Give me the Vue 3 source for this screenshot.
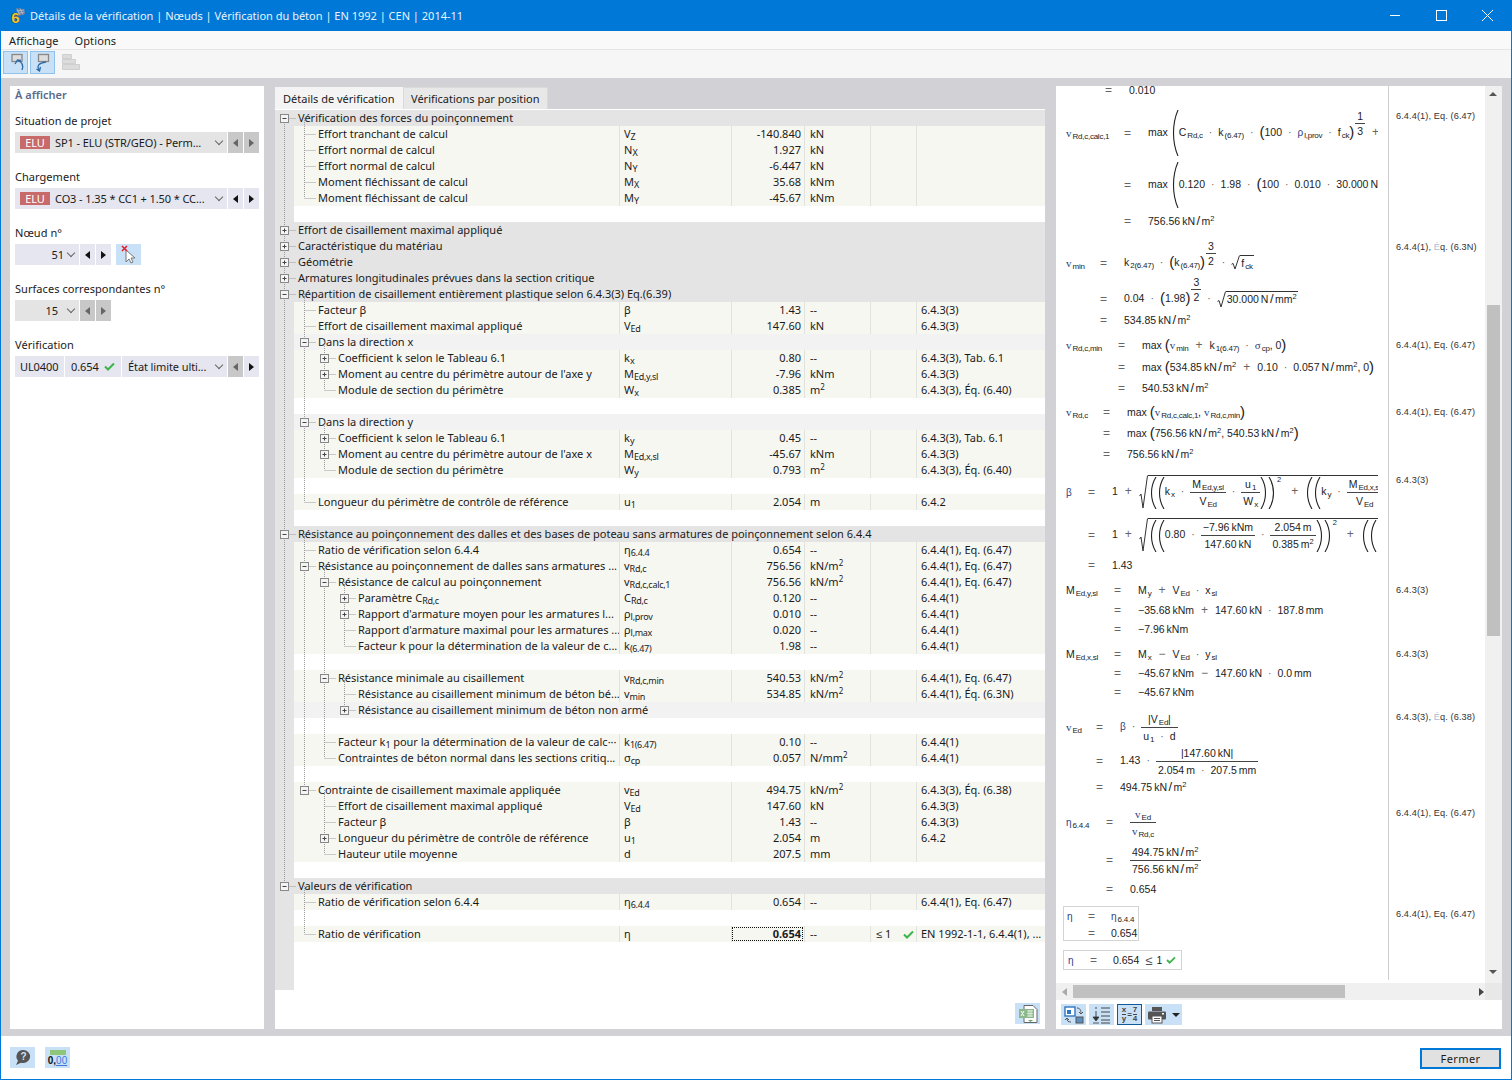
<script setup>
// tree rows of the detail table: one entry per 16px row, null = blank row
const row = (lv, t, s = '', v = '', u = '', r = '', extra = {}) => ({ lv, t, s, v, u, r, ...extra })
const group = (t, box = '-') => ({ lv: 0, t, box, kind: 'g0' })
const sub = (a, b) => `${a}<sub>${b}</sub>`
const m2 = 'm<sup>2</sup>'
const kNm2 = 'kN/m<sup>2</sup>'
const eq647 = '6.4.4(1), Eq. (6.47)'

const rows = [
  group('Vérification des forces du poinçonnement'),
  row(1, 'Effort tranchant de calcul', sub('V', 'Z'), '-140.840', 'kN'),
  row(1, 'Effort normal de calcul', sub('N', 'X'), '1.927', 'kN'),
  row(1, 'Effort normal de calcul', sub('N', 'Y'), '-6.447', 'kN'),
  row(1, 'Moment fléchissant de calcul', sub('M', 'X'), '35.68', 'kNm'),
  row(1, 'Moment fléchissant de calcul', sub('M', 'Y'), '-45.67', 'kNm'),
  null,
  group('Effort de cisaillement maximal appliqué', '+'),
  group('Caractéristique du matériau', '+'),
  group('Géométrie', '+'),
  group('Armatures longitudinales prévues dans la section critique', '+'),
  group('Répartition de cisaillement entièrement plastique selon 6.4.3(3) Eq.(6.39)'),
  row(1, 'Facteur β', 'β', '1.43', '--', '6.4.3(3)'),
  row(1, 'Effort de cisaillement maximal appliqué', sub('V', 'Ed'), '147.60', 'kN', '6.4.3(3)'),
  { lv: 1, t: 'Dans la direction x', box: '-', kind: 'g1' },
  row(2, 'Coefficient k selon le Tableau 6.1', sub('k', 'x'), '0.80', '--', '6.4.3(3), Tab. 6.1', { box: '+' }),
  row(2, 'Moment au centre du périmètre autour de l\'axe y', sub('M', 'Ed,y,sl'), '-7.96', 'kNm', '6.4.3(3)', { box: '+' }),
  row(2, 'Module de section du périmètre', sub('W', 'x'), '0.385', m2, '6.4.3(3), Éq. (6.40)'),
  null,
  { lv: 1, t: 'Dans la direction y', box: '-', kind: 'g1' },
  row(2, 'Coefficient k selon le Tableau 6.1', sub('k', 'y'), '0.45', '--', '6.4.3(3), Tab. 6.1', { box: '+' }),
  row(2, 'Moment au centre du périmètre autour de l\'axe x', sub('M', 'Ed,x,sl'), '-45.67', 'kNm', '6.4.3(3)', { box: '+' }),
  row(2, 'Module de section du périmètre', sub('W', 'y'), '0.793', m2, '6.4.3(3), Éq. (6.40)'),
  null,
  row(1, 'Longueur du périmètre de contrôle de référence', sub('u', '1'), '2.054', 'm', '6.4.2'),
  null,
  group('Résistance au poinçonnement des dalles et des bases de poteau sans armatures de poinçonnement selon 6.4.4'),
  row(1, 'Ratio de vérification selon 6.4.4', sub('η', '6.4.4'), '0.654', '--', eq647),
  row(1, 'Résistance au poinçonnement de dalles sans armatures ...', sub('v', 'Rd,c'), '756.56', kNm2, eq647, { box: '-' }),
  row(2, 'Résistance de calcul au poinçonnement', sub('v', 'Rd,c,calc,1'), '756.56', kNm2, eq647, { box: '-' }),
  row(3, 'Paramètre C<sub>Rd,c</sub>', sub('C', 'Rd,c'), '0.120', '--', '6.4.4(1)', { box: '+' }),
  row(3, 'Rapport d\'armature moyen pour les armatures l...', sub('ρ', 'l,prov'), '0.010', '--', '6.4.4(1)', { box: '+' }),
  row(3, 'Rapport d\'armature maximal pour les armatures ...', sub('ρ', 'l,max'), '0.020', '--', '6.4.4(1)'),
  row(3, 'Facteur k pour la détermination de la valeur de c...', sub('k', '(6.47)'), '1.98', '--', '6.4.4(1)'),
  null,
  row(2, 'Résistance minimale au cisaillement', sub('v', 'Rd,c,min'), '540.53', kNm2, eq647, { box: '-' }),
  row(3, 'Résistance au cisaillement minimum de béton bé...', sub('v', 'min'), '534.85', kNm2, '6.4.4(1), Éq. (6.3N)'),
  { lv: 3, t: 'Résistance au cisaillement minimum de béton non armé', box: '+', kind: 'g1' },
  null,
  row(2, 'Facteur k<sub>1</sub> pour la détermination de la valeur de calc···', sub('k', '1(6.47)'), '0.10', '--', '6.4.4(1)'),
  row(2, 'Contraintes de béton normal dans les sections critiq...', sub('σ', 'cp'), '0.057', 'N/mm<sup>2</sup>', '6.4.4(1)'),
  null,
  row(1, 'Contrainte de cisaillement maximale appliquée', sub('v', 'Ed'), '494.75', kNm2, '6.4.3(3), Éq. (6.38)', { box: '-' }),
  row(2, 'Effort de cisaillement maximal appliqué', sub('V', 'Ed'), '147.60', 'kN', '6.4.3(3)'),
  row(2, 'Facteur β', 'β', '1.43', '--', '6.4.3(3)'),
  row(2, 'Longueur du périmètre de contrôle de référence', sub('u', '1'), '2.054', 'm', '6.4.2', { box: '+' }),
  row(2, 'Hauteur utile moyenne', 'd', '207.5', 'mm'),
  null,
  group('Valeurs de vérification'),
  row(1, 'Ratio de vérification selon 6.4.4', sub('η', '6.4.4'), '0.654', '--', eq647),
  null,
  row(1, 'Ratio de vérification', 'η', '0.654', '--', 'EN 1992-1-1, 6.4.4(1), ...', { focus: true })
]

// dotted tree guides, worked out from the levels
const xOf = lv => 9.5 + 20 * lv
const yOf = i => 16 * i + 8
const guides = []
const boxes = []
rows.forEach((r, i) => {
  if (!r) return
  const x = xOf(r.lv)
  let p = i - 1
  while (p >= 0 && (!rows[p] || rows[p].lv >= (r.lv || 1)) && !(r.lv === 0 && rows[p] && rows[p].lv === 0)) p--
  if (p >= 0) guides.push(`M${x} ${yOf(p)}V${yOf(i)}`)
  guides.push(`M${x} ${yOf(i) + 0.5}H${x + 11}`)
  if (r.box) boxes.push({ x: x - 4, y: yOf(i) - 3.5, plus: r.box === '+' })
})

// formula helpers
const o = c => `<b class="o${c === '·' ? '' : ' big'}">${c}</b>`
const dot = o('·')
const mv = b => `<i class="mv">v</i><sub class="ws">${b}</sub>`
const ws = (a, b) => `${a}<sub class="ws">${b}</sub>`
const fr = (a, b) => `<span class="fr"><span>${a}</span><span>${b}</span></span>`
const par = (h, flip) => `<svg class="par" width="8" height="${h}" viewBox="0 0 8 ${h}"><path d="${flip ? `M1 0C7 ${h * 0.3} 7 ${h * 0.7} 1 ${h}` : `M7 0C1 ${h * 0.3} 1 ${h * 0.7} 7 ${h}`}" fill="none" stroke="#222" stroke-width="1.1"/></svg>`
const root = (inner, h) => `<span class="root"><svg width="9" height="${h}" viewBox="0 0 9 ${h}"><path d="M0.5 ${h * 0.62}L2 ${h * 0.56}L4 ${h - 1}L8.5 0.5" fill="none" stroke="#333"/></svg><span class="rc">${inner}</span></span>`
const exp = (a, b) => `<span class="fr ex"><span>${a}</span><span>${b}</span></span>`
const P = c => `<span class="p">${c}</span>`
const u = (n, unit) => `${n}<span class="un">${unit.replace('/m', '<span class="sl">/</span>m')}</span>`
const kn2 = n => u(n, 'kN/m<sup>2</sup>')

const blocks = [
  { w: 49, rows: [{ h: 24, x: '0.010' }] },
  { w: 68, rows: [
    { h: 62, s: mv('Rd,c,calc,1'), x: `max ${par(46)}${ws('C', 'Rd,c')}${dot}${ws('k', '(6.47)')}${dot}${P('(')}100${dot}<i class="rho">ρ</i><sub class="ws">l,prov</sub>${dot}${ws('f', 'ck')}${P(')')}${exp('1', '3')}${o('+')}` },
    { h: 42, x: `max ${par(46)}0.120${dot}1.98${dot}${P('(')}100${dot}0.010${dot}${u('30.000', 'N/mm<sup>2</sup>')}` },
    { h: 30, x: kn2('756.56') }
  ] },
  { w: 44, rows: [
    { h: 54, s: mv('min'), x: `${ws('k', '2(6.47)')}${dot}${P('(')}${ws('k', '(6.47)')}${P(')')}${exp('3', '2')}${dot}${root(ws('f', 'ck'), 15)}` },
    { h: 18, x: `0.04${dot}${P('(')}1.98${P(')')}${exp('3', '2')}${dot}${root(u('30.000', 'N/mm<sup>2</sup>'), 17)}` },
    { h: 24, x: kn2('534.85') }
  ] },
  { w: 62, rows: [
    { h: 26, s: mv('Rd,c,min'), x: `max ${P('(')}${mv('min')}${o('+')}${ws('k', '1(6.47)')}${dot}<i class="mv">σ</i><sub class="ws">cp</sub>, 0${P(')')}` },
    { h: 18, x: `max ${P('(')}${kn2('534.85')}${o('+')}0.10${dot}${u('0.057', 'N/mm<sup>2</sup>')}, 0${P(')')}` },
    { h: 24, x: kn2('540.53') }
  ] },
  { w: 47, rows: [
    { h: 24, s: mv('Rd,c'), x: `max ${P('(')}${mv('Rd,c,calc,1')}, ${mv('Rd,c,min')}${P(')')}` },
    { h: 18, x: `max ${P('(')}${kn2('756.56')}, ${kn2('540.53')}${P(')')}` },
    { h: 24, x: kn2('756.56') }
  ] },
  { w: 32, rows: [
    { h: 52, s: '<i class="rho">β</i>', x: `1${o('+')}${root(`${par(32)}${par(32)}${ws('k', 'x')}${dot}${fr(ws('M', 'Ed,y,sl'), ws('V', 'Ed'))}${dot}${fr(ws('u', '1'), ws('W', 'x'))}${par(32, true)}${par(32, true)}<sup class="sq">2</sup>${o('+')}${par(32)}${par(32)}${ws('k', 'y')}${dot}${fr(ws('M', 'Ed,x,sl'), ws('V', 'Ed'))}`, 34)}` },
    { h: 34, x: `1${o('+')}${root(`${par(32)}${par(32)}0.80${dot}${fr(u('−7.96', 'kNm'), u('147.60', 'kN'))}${dot}${fr(u('2.054', 'm'), u('0.385', 'm<sup>2</sup>'))}${par(32, true)}${par(32, true)}<sup class="sq">2</sup>${o('+')}${par(32)}${par(32)}`, 34)}` },
    { h: 26, x: '1.43' }
  ] },
  { w: 58, rows: [
    { h: 24, s: ws('M', 'Ed,y,sl'), x: `${ws('M', 'y')}${o('+')}${ws('V', 'Ed')}${dot}${ws('x', 'sl')}` },
    { h: 16, x: `${u('−35.68', 'kNm')}${o('+')}${u('147.60', 'kN')}${dot}${u('187.8', 'mm')}` },
    { h: 22, x: u('−7.96', 'kNm') }
  ] },
  { w: 58, rows: [
    { h: 28, s: ws('M', 'Ed,x,sl'), x: `${ws('M', 'x')}${o('−')}${ws('V', 'Ed')}${dot}${ws('y', 'sl')}` },
    { h: 10, x: `${u('−45.67', 'kNm')}${o('−')}${u('147.60', 'kN')}${dot}${u('0.0', 'mm')}` },
    { h: 28, x: u('−45.67', 'kNm') }
  ] },
  { w: 40, rows: [
    { h: 42, s: mv('Ed'), x: `<i class="rho">β</i>${dot}${fr(`|${ws('V', 'Ed')}|`, `${ws('u', '1')}${dot}d`)}` },
    { h: 26, x: `1.43${dot}${fr(`|${u('147.60', 'kN')}|`, `${u('2.054', 'm')}${dot}${u('207.5', 'mm')}`)}` },
    { h: 26, x: kn2('494.75') }
  ] },
  { w: 50, rows: [
    { h: 44, s: `<i class="rho">η</i><sub class="ws">6.4.4</sub>`, x: fr(mv('Ed'), mv('Rd,c')) },
    { h: 32, x: fr(kn2('494.75'), kn2('756.56')) },
    { h: 26, x: '0.654' }
  ] }
]

// references in the column right of the formulas, y = centre of the text
const refs = [
  { y: 116, t: eq647 },
  { y: 247, t: '6.4.4(1), ', f: 'É', e: 'q. (6.3N)' },
  { y: 345, t: eq647 },
  { y: 412, t: eq647 },
  { y: 480, t: '6.4.3(3)' },
  { y: 590, t: '6.4.3(3)' },
  { y: 654, t: '6.4.3(3)' },
  { y: 717, t: '6.4.3(3), ', f: 'É', e: 'q. (6.38)' },
  { y: 813, t: eq647 },
  { y: 914, t: eq647 }
].map((r, i, all) => ({ ...r, h: (all[i + 1] ? all[i + 1].y : r.y + 20) - r.y }))
</script>

<template>
  <div class="window">
    <header class="titlebar">
      <svg class="app-icon" width="17" height="17" viewBox="0 0 17 17">
        <path d="M7 1l8 1 1 5-6 2z" fill="#6d7d96" />
        <path d="M8 2l3 6M11 1.500l3 6M7.500 4l8-1M8.500 6.500l7-1.500" stroke="#c8d4e4" stroke-width=".6" />
        <text x="6.500" y="15.500" text-anchor="middle" font-size="15" font-weight="700" fill="#f0c42e" stroke="#3a3320" stroke-width=".7" paint-order="stroke" font-family="Liberation Sans, sans-serif">6</text>
      </svg>
      <span class="title">Détails de la vérification | Nœuds | Vérification du béton | EN 1992 | CEN | 2014-11</span>
      <div class="win-btns">
        <svg width="46" height="31" viewBox="0 0 46 31"><path d="M18 15.500h10" stroke="#fff" /></svg>
        <svg width="46" height="31" viewBox="0 0 46 31"><rect x="18.500" y="10.500" width="10" height="10" fill="none" stroke="#fff" /></svg>
        <svg width="46" height="31" viewBox="0 0 46 31"><path d="M18 10l11 11M29 10L18 21" stroke="#fff" /></svg>
      </div>
    </header>

    <nav class="menubar">
      <span>Affichage</span>
      <span>Options</span>
    </nav>

    <div class="toolbar">
      <button class="tb-btn">
        <svg width="20" height="20" viewBox="0 0 20 20">
          <rect x="6" y="2.500" width="10" height="7" fill="#ddd" stroke="#888" stroke-width="1.300" />
          <path d="M11.500 8C16 10 18 13 16 18M9 12l2.500-4 3.500.5" fill="none" stroke="#2a6aa8" stroke-width="1.300" />
        </svg>
      </button>
      <button class="tb-btn">
        <svg width="20" height="20" viewBox="0 0 20 20">
          <rect x="5.500" y="2.500" width="10" height="7" fill="#ddd" stroke="#888" stroke-width="1.300" />
          <path d="M13 10C6 11 3 14 6.500 18.500M3.500 17l3 2 1-4" fill="none" stroke="#2a6aa8" stroke-width="1.300" />
        </svg>
      </button>
      <svg class="tb-off" width="18" height="16" viewBox="0 0 18 16">
        <path d="M.5.500h9v4h-9zM.5 5.500h13v4H.5zM.5 10.500h17v5H.5z" fill="#dcdcdc" stroke="#cfcfcf" />
      </svg>
    </div>

    <main class="workspace">
      <aside class="side">
        <h2 class="side-title">À afficher</h2>

        <div class="field">
          <label>Situation de projet</label>
          <div class="ctrl">
            <div class="combo off wide"><span class="badge">ELU</span><span class="ctext">SP1 - ELU (STR/GEO) - Perm...</span><i class="chev"></i></div>
            <button class="step off"><i class="tri l"></i></button>
            <button class="step off"><i class="tri r"></i></button>
          </div>
        </div>

        <div class="field">
          <label>Chargement</label>
          <div class="ctrl">
            <div class="combo wide"><span class="badge">ELU</span><span class="ctext">CO3 - 1.35 * CC1 + 1.50 * CC...</span><i class="chev"></i></div>
            <button class="step"><i class="tri l"></i></button>
            <button class="step"><i class="tri r"></i></button>
          </div>
        </div>

        <div class="field">
          <label>Nœud n°</label>
          <div class="ctrl">
            <div class="combo num"><span class="ntext">51</span><i class="chev"></i></div>
            <button class="step"><i class="tri l"></i></button>
            <button class="step"><i class="tri r"></i></button>
            <button class="pick">
              <svg width="18" height="20" viewBox="0 0 18 20">
                <path d="M6 5v12l3-3 2 4 2-1-2-4h4z" fill="#fff" stroke="#777" />
                <path d="M2 1l5 5M7 1L2 6" stroke="#e0202c" stroke-width="1.600" />
              </svg>
            </button>
          </div>
        </div>

        <div class="field">
          <label>Surfaces correspondantes n°</label>
          <div class="ctrl">
            <div class="combo off num"><span class="ntext n2">15</span><i class="chev"></i></div>
            <button class="step off"><i class="tri l"></i></button>
            <button class="step off"><i class="tri r"></i></button>
          </div>
        </div>

        <div class="field">
          <label>Vérification</label>
          <div class="ctrl">
            <div class="combo wide split">
              <span class="seg s1">UL0400</span>
              <span class="seg s2">0.654
                <svg width="11" height="9" viewBox="0 0 11 9"><path d="M1 4.500l3 3 6-6" fill="none" stroke="#3cb44a" stroke-width="2" /></svg>
              </span>
              <span class="seg s3">État limite ulti...</span>
              <i class="chev"></i>
            </div>
            <button class="step off"><i class="tri l"></i></button>
            <button class="step"><i class="tri r"></i></button>
          </div>
        </div>
      </aside>

      <section class="center">
        <div class="tabs">
          <span class="tab active">Détails de vérification</span>
          <span class="tab">Vérifications par position</span>
        </div>
        <div class="center-body">
          <div class="tree">
            <div
              v-for="(r, i) in rows"
              :key="i"
              class="trow"
              :class="r ? (r.kind || 'leaf') : 'blank'"
            >
              <template v-if="r">
                <div class="name" :class="'lv' + r.lv" v-html="r.t"></div>
                <template v-if="!r.kind">
                  <div class="cell sym" v-html="r.s"></div>
                  <div class="cell val" :class="{ focus: r.focus }">{{ r.v }}</div>
                  <div class="cell unit" v-html="r.u"></div>
                  <div class="cell chk">
                    <template v-if="r.focus">
                      <span>≤ 1</span>
                      <svg width="11" height="9" viewBox="0 0 11 9"><path d="M1 4.500l3 3 6-6" fill="none" stroke="#3cb44a" stroke-width="2" /></svg>
                    </template>
                  </div>
                  <div class="cell ref">{{ r.r }}</div>
                </template>
              </template>
            </div>
            <div class="tree-end"></div>

            <svg class="guides" width="120" height="832">
              <path :d="guides.join('')" fill="none" stroke="#9a9a9a" stroke-dasharray="1 1" />
              <g v-for="(b, i) in boxes" :key="i">
                <rect :x="b.x" :y="b.y" width="8" height="8" fill="#f4f4f4" stroke="#888" />
                <path :d="`M${b.x + 2} ${b.y + 4}h4`" stroke="#444" />
                <path v-if="b.plus" :d="`M${b.x + 4} ${b.y + 2}v4`" stroke="#444" />
              </g>
            </svg>
          </div>
          <button class="export">
            <svg width="20" height="18" viewBox="0 0 20 18">
              <path d="M6 .500h9l4 4v13H6z" fill="#fff" stroke="#666" />
              <rect x="1" y="4" width="15" height="9" fill="#8cb88c" />
              <path d="M3 6l3 5M6 6l-3 5" stroke="#fff" />
              <path d="M9 6h6M9 8.500h6M9 11h6M11 5v7M13 5v7" stroke="#e8f2e8" stroke-width=".8" />
              <path d="M10 15h5l-2.500 2z" fill="#6aa56a" />
            </svg>
          </button>
        </div>
      </section>

      <section class="report">
        <div class="report-top">
          <div class="formulas">
            <div class="f-inner">
              <div v-for="(b, i) in blocks" :key="i" class="fblock">
                <div
                  v-for="(r, j) in b.rows"
                  :key="j"
                  class="frow"
                  :style="{ height: r.h + 'px', gridTemplateColumns: b.w + 'px 24px 1fr' }"
                >
                  <span class="fsym" v-html="r.s"></span>
                  <span class="feq">=</span>
                  <span class="fexpr" v-html="r.x"></span>
                </div>
              </div>

              <div class="fbox b1">
                <div class="frow box-row">
                  <span class="fsym2"><i class="rho">η</i></span><span class="feq">=</span>
                  <span class="fexpr"><i class="rho">η</i><sub class="ws">6.4.4</sub></span>
                </div>
                <div class="frow box-row">
                  <span></span><span class="feq">=</span><span class="fexpr">0.654</span>
                </div>
              </div>
              <div class="fbox b2">
                <span class="fsym2"><i class="rho">η</i></span>
                <span class="feq">=</span>
                <span class="fexpr">0.654</span>
                <span class="leq">≤</span>
                <span class="fexpr">1</span>
                <svg width="10" height="8" viewBox="0 0 11 9"><path d="M1 4.500l3 3 6-6" fill="none" stroke="#3cb44a" stroke-width="2" /></svg>
              </div>
            </div>
          </div>

          <div class="refs">
            <div v-for="(r, i) in refs" :key="i" class="ref-row" :style="{ height: r.h + 'px' }">
              {{ r.t }}<span v-if="r.f" class="faint">{{ r.f }}</span>{{ r.e }}
            </div>
          </div>

          <div class="vbar">
            <i class="arrow up"></i>
            <div class="vthumb"></div>
            <i class="arrow down"></i>
          </div>
        </div>

        <div class="hbar">
          <i class="tri l pale"></i>
          <div class="hthumb"></div>
          <i class="tri r dark"></i>
          <div class="corner"></div>
        </div>

        <div class="report-tools">
          <button class="rt">
            <svg width="22" height="20" viewBox="0 0 22 20">
              <rect x="2" y="2" width="10" height="9" fill="#fff" stroke="#2f75c0" stroke-width="1.400" />
              <rect x="4" y="5" width="4" height="4" fill="#2f75c0" />
              <rect x="13" y="12" width="7" height="6" fill="#5b8fc0" stroke="#555" />
              <path d="M14 3c3 0 4 2 4 6M16 7l2 2 2-2M8 17c-3 0-4-1-4-4M2 15l2-2 2 2" fill="none" stroke="#555" />
            </svg>
          </button>
          <button class="rt">
            <svg width="20" height="20" viewBox="0 0 20 20">
              <path d="M9 3h9M9 7h9M9 11h9M9 15h9M9 18h9" stroke="#444" />
              <path d="M4 2v2M4 6v6" stroke="#444" />
              <path d="M1 12h6l-3 4zM1 18h6" fill="#333" stroke="#333" stroke-width=".8" />
            </svg>
          </button>
          <button class="rt on">
            <span class="mini-frac"><span>x</span><span>y</span></span><span class="mini-eq">=</span><span class="mini-frac"><span>7</span><span>4</span></span>
          </button>
          <button class="rt print">
            <svg width="20" height="18" viewBox="0 0 20 18">
              <rect x="5" y="1" width="10" height="4" fill="#555" />
              <rect x="1" y="5.500" width="18" height="8" rx="1" fill="#555" />
              <rect x="5" y="10" width="10" height="7" fill="#fff" stroke="#555" />
              <path d="M7 12.500h6M7 14.500h6" stroke="#555" />
              <rect x="15" y="7" width="2" height="1.500" fill="#fff" />
            </svg>
            <i class="drop"></i>
          </button>
        </div>
      </section>
    </main>

    <footer class="footer">
      <button class="foot-btn">
        <svg width="18" height="17" viewBox="0 0 18 17">
          <path d="M9 1a7 6.500 0 1 1-2 12.700L2 16l2-4.300A6.500 6.500 0 0 1 9 1z" fill="#555" />
          <text x="9.500" y="11" text-anchor="middle" font-size="10" font-weight="700" fill="#cfe4f7" font-family="Liberation Sans, sans-serif">?</text>
        </svg>
      </button>
      <button class="foot-btn num-btn">
        <span class="ruler"></span>
        <span class="zero">0,<u>00</u></span>
      </button>
      <button class="close-btn">Fermer</button>
    </footer>
  </div>
</template>

<style>
body {
  margin: 0;
}

/* formula pieces come through v-html */
.fexpr sub, .fsym sub, .fsym2 sub, .fexpr sup {
  line-height: 0;
}
.fexpr sub, .fsym sub, .fsym2 sub {
  font-size: 8px;
  vertical-align: -2px;
}
.fexpr sub.ws, .fsym sub.ws, .fsym2 sub.ws {
  margin-left: 1px;
  letter-spacing: -0.25px;
}
.fexpr sup {
  font-size: 7.5px;
  vertical-align: 4px;
}
.fexpr .o {
  font-weight: 400;
  color: #666;
  margin: 0 6px;
}
.fexpr .o.big {
  margin: 0 7px;
  font-size: 12px;
}
.fexpr .mv, .fsym .mv {
  font-family: "Liberation Serif", serif;
  font-style: normal;
  font-size: 11px;
  color: #2c3f86;
}
.fexpr .rho, .fsym .rho, .fsym2 .rho {
  font-style: normal;
  color: #2c3f86;
  font-size: 10px;
}
.fexpr .p {
  font-size: 15px;
  font-weight: 300;
  line-height: 0;
  vertical-align: -1px;
}
.fexpr .un {
  margin-left: 2px;
}
.fexpr .sl {
  font-size: 13px;
  line-height: 0;
  margin: 0 1.5px;
  font-weight: 300;
}
.fexpr .par {
  vertical-align: middle;
}
.fexpr .fr {
  display: inline-flex;
  flex-direction: column;
  align-items: center;
  vertical-align: middle;
  line-height: 16px;
}
.fexpr .fr > span:first-child {
  align-self: stretch;
  text-align: center;
  border-bottom: 1px solid #444;
  padding: 0 2px;
}
.fexpr .fr > span:last-child {
  padding: 0 2px;
}
.fexpr .fr.ex {
  position: relative;
  top: -10px;
  margin-left: 1px;
  line-height: 14px;
}
.fexpr .root {
  display: inline-flex;
  vertical-align: middle;
  align-items: flex-start;
}
.fexpr .rc {
  border-top: 1px solid #333;
  padding: 0 1px;
  line-height: 15px;
  white-space: nowrap;
}
.fexpr .sq {
  position: relative;
  top: -9px;
  margin: 0 3px 0 1px;
}
</style>

<style scoped>
.window {
  width: 1512px;
  height: 1080px;
  box-sizing: border-box;
  display: flex;
  flex-direction: column;
  border: 1px solid #0078d7;
  border-top: none;
  background: #fff;
  font-family: "Noto Sans", "Liberation Sans", sans-serif;
  font-size: 11px;
  color: #1a1a1a;
  overflow: hidden;
}

button {
  border: none;
  padding: 0;
  font: inherit;
  color: inherit;
}

/* title bar */
.titlebar {
  height: 31px;
  background: #0078d7;
  color: #e9f3fb;
  display: flex;
  align-items: center;
  padding-left: 8px;
  flex: none;
}
.app-icon {
  margin-right: 4px;
}
.title {
  font-size: 11px;
}
.win-btns {
  margin-left: auto;
  display: flex;
  margin-right: 1px;
}

.menubar {
  height: 19px;
  flex: none;
  background: #f9f9f9;
  border-bottom: 1px solid #e6e6e6;
  box-sizing: border-box;
  display: flex;
  gap: 16px;
  padding-left: 8px;
  align-items: center;
  letter-spacing: 0.1px;
}

.toolbar {
  height: 28px;
  flex: none;
  box-sizing: border-box;
  background: #f6f6f6;
  display: flex;
  align-items: center;
  gap: 2px;
  padding: 0 0 4px 2px;
}
.tb-btn {
  width: 25px;
  height: 23px;
  box-sizing: border-box;
  background: #c9e1f6;
  border: 1px solid #8fc3ee;
  display: flex;
  align-items: center;
  justify-content: center;
}
.tb-off {
  margin-left: 5px;
}

/* main area */
.workspace {
  height: 958px;
  flex: none;
  box-sizing: border-box;
  background: #d1d1d6;
  display: flex;
  gap: 11px;
  padding: 8px 9px 7px 9px;
}

.side {
  width: 254px;
  background: #fff;
  flex: none;
  box-sizing: border-box;
  padding: 0 5px;
}
.side-title {
  margin: 0;
  height: 18px;
  font-size: 11px;
  font-weight: 600;
  color: #5a6a8c;
  line-height: 18px;
}
.field {
  height: 56px;
  padding-top: 8px;
  box-sizing: border-box;
}
.field label {
  display: block;
  height: 20px;
  line-height: 18px;
  letter-spacing: 0.05px;
}
.ctrl {
  display: flex;
  gap: 1px;
}
.combo {
  height: 21px;
  background: #e6e6f0;
  display: flex;
  align-items: center;
  position: relative;
  box-sizing: border-box;
  letter-spacing: -0.1px;
}
.combo.off {
  background: #e4e4e4;
}
.combo.wide {
  width: 212px;
  padding-left: 5px;
}
.combo.num {
  width: 64px;
}
.badge {
  width: 30px;
  height: 13px;
  line-height: 13px;
  text-align: center;
  background: #c96a6a;
  color: #fff;
  margin-right: 5px;
  flex: none;
}
.ctext {
  white-space: nowrap;
}
.ntext {
  margin-left: auto;
  margin-right: 15px;
}
.ntext.n2 {
  margin-right: 21px;
}
.chev {
  position: absolute;
  right: 5px;
  top: 6px;
  width: 5px;
  height: 5px;
  border-right: 1px solid #666;
  border-bottom: 1px solid #666;
  transform: rotate(45deg);
}
.step {
  width: 15px;
  height: 21px;
  background: #e6e6f0;
  display: flex;
  align-items: center;
  justify-content: center;
}
.step.off {
  background: #c8c8c8;
}
.tri {
  display: block;
  width: 0;
  height: 0;
  border-top: 4px solid transparent;
  border-bottom: 4px solid transparent;
}
.tri.l {
  border-right: 5px solid #111;
}
.tri.r {
  border-left: 5px solid #111;
}
.step.off .tri.l {
  border-right-color: #666;
}
.step.off .tri.r {
  border-left-color: #666;
}
.pick {
  width: 25px;
  height: 21px;
  margin-left: 4px;
  background: #c9e1f6;
  display: flex;
  align-items: center;
  justify-content: center;
}
.split .seg {
  white-space: nowrap;
  display: flex;
  align-items: center;
  height: 100%;
}
.s1 {
  width: 44px;
}
.s2 {
  width: 57px;
  border-left: 1px solid #fff;
  padding-left: 6px;
  gap: 5px;
  box-sizing: border-box;
}
.s3 {
  border-left: 1px solid #fff;
  padding-left: 6px;
}

/* centre */
.center {
  width: 770px;
  flex: none;
  display: flex;
  flex-direction: column;
}
.tabs {
  height: 23px;
  flex: none;
  display: flex;
  padding-top: 1px;
  box-sizing: border-box;
}
.tab {
  padding: 0 7px;
  width: 145px;
  box-sizing: border-box;
  background: #e8e8e8;
  border: 1px solid #dadada;
  border-bottom: none;
  line-height: 21px;
  white-space: nowrap;
}
.tab.active {
  width: 128px;
  padding-left: 8px;
  background: #f4f4f4;
  border: none;
  line-height: 23px;
}
.center-body {
  flex: 1;
  min-height: 0;
  background: #fff;
  position: relative;
}
.tree {
  position: relative;
  padding-top: 1px;
}
.trow {
  height: 16px;
  display: grid;
  grid-template-columns: 344px 112px 73px 66px 46px 129px;
  background: linear-gradient(to right, #e4e4e4 19px, transparent 19px);
  line-height: 16px;
  white-space: nowrap;
}
.trow.g0 {
  background: #e4e4e4;
  display: block;
}
.trow.g1 {
  background: linear-gradient(to right, #e4e4e4 19px, #f2f2f2 19px);
  display: block;
}
.trow.leaf {
  background: linear-gradient(to right, #e4e4e4 19px, #f7f7f2 19px);
}
.name {
  overflow: hidden;
}
.name.lv0 {
  padding-left: 23px;
}
.name.lv1 {
  padding-left: 43px;
}
.name.lv2 {
  padding-left: 63px;
}
.name.lv3 {
  padding-left: 83px;
}
.cell {
  border-left: 1px solid #e2e2dc;
  box-sizing: border-box;
  overflow: hidden;
}
.sym {
  padding-left: 4px;
}
.val {
  text-align: right;
  padding-right: 3px;
}
.val.focus {
  font-weight: 700;
  outline: 1px dotted #111;
  outline-offset: -2px;
}
.unit {
  padding-left: 5px;
}
.chk {
  padding-left: 5px;
  display: flex;
  align-items: center;
  justify-content: space-between;
  padding-right: 2px;
}
.ref {
  padding-left: 4px;
}
.cell :deep(sub), .name :deep(sub) {
  font-size: 9px;
  line-height: 0;
  vertical-align: -2px;
  letter-spacing: -0.3px;
}
.cell :deep(sup) {
  font-size: 8px;
  line-height: 0;
  vertical-align: 4px;
}
.tree-end {
  height: 48px;
  width: 19px;
  background: #e4e4e4;
}
.guides {
  position: absolute;
  left: 0;
  top: 1px;
  pointer-events: none;
}
.export {
  position: absolute;
  right: 5px;
  bottom: 5px;
  width: 25px;
  height: 21px;
  background: #c9e1f6;
  display: flex;
  align-items: center;
  justify-content: center;
}

/* report on the right */
.report {
  flex: 1;
  min-width: 0;
  background: #fff;
  display: flex;
  flex-direction: column;
}
.report-top {
  height: 897px;
  flex: none;
  display: flex;
}
.formulas {
  width: 322px;
  height: 894px;
  overflow: hidden;
  flex: none;
  font-family: "Liberation Sans", Arial, sans-serif;
  font-size: 10.5px;
  color: #222;
}
.f-inner {
  margin-top: -8px;
}
.frow {
  display: grid;
  grid-template-rows: minmax(0, 1fr);
  align-items: center;
  white-space: nowrap;
}
.box-row {
  grid-template-columns: 21px 23px auto;
}
.fsym {
  padding-left: 10px;
}
.feq {
  color: #666;
  font-size: 12px;
}
.fbox {
  border: 1px solid #d4d4d4;
  margin-left: 7px;
  box-sizing: border-box;
}
.fbox.b1 {
  width: 76px;
  height: 35px;
  margin-top: 4px;
  padding: 0 3px 0 3px;
}
.fbox.b1 .frow {
  height: 17px;
}
.fbox.b2 {
  width: 119px;
  height: 20px;
  margin-top: 9px;
  padding-left: 4px;
  display: flex;
  align-items: center;
}
.b2 .fsym2 {
  width: 22px;
}
.b2 .feq {
  width: 23px;
}
.leq {
  margin: 0 4px 0 6px;
  color: #555;
  font-size: 13px;
}
.b2 svg {
  margin-left: 4px;
}
.refs {
  width: 97px;
  height: 894px;
  flex: none;
  margin-left: 10px;
  border-left: 1px solid #cfcfcf;
  box-sizing: border-box;
  padding: 24px 0 0 7px;
  font-family: "Liberation Sans", Arial, sans-serif;
  font-size: 9.2px;
  letter-spacing: 0.1px;
  line-height: 12px;
  color: #333;
  white-space: nowrap;
  overflow: hidden;
}
.faint {
  color: #a8bcd6;
}
.vbar {
  flex: 1;
  background: #f0f0f0;
  position: relative;
}
.vthumb {
  position: absolute;
  left: 2px;
  right: 2px;
  top: 219px;
  height: 331px;
  background: #c0c0c0;
}
.arrow {
  position: absolute;
  left: 4px;
  border-left: 4px solid transparent;
  border-right: 4px solid transparent;
}
.arrow.up {
  top: 6px;
  border-bottom: 4px solid #555;
}
.arrow.down {
  bottom: 9px;
  border-top: 4px solid #555;
}
.hbar {
  height: 17px;
  flex: none;
  background: #f0f0f0;
  position: relative;
  display: flex;
  align-items: center;
  padding-left: 6px;
}
.hthumb {
  position: absolute;
  left: 17px;
  width: 272px;
  top: 2px;
  height: 13px;
  background: #c0c0c0;
}
.tri.pale {
  border-right-color: #aaa;
}
.tri.dark {
  border-left-color: #444;
  margin-left: 412px;
}
.corner {
  position: absolute;
  right: 0;
  top: 0;
  width: 17px;
  height: 17px;
  background: #e8e8e8;
}
.report-tools {
  flex: 1;
  display: flex;
  align-items: flex-start;
  padding: 4px 0 0 5px;
  gap: 3px;
}
.rt {
  width: 25px;
  height: 21px;
  box-sizing: border-box;
  background: #c9e1f6;
  display: flex;
  align-items: center;
  justify-content: center;
}
.rt.on {
  border: 1px solid #0e5a9c;
  font-family: "Liberation Sans", sans-serif;
  font-size: 8px;
  font-weight: 700;
  color: #444;
}
.mini-frac {
  display: inline-flex;
  flex-direction: column;
  line-height: 8px;
}
.mini-frac span:first-child {
  border-bottom: 1px solid #444;
}
.mini-eq {
  margin: 0 1px;
}
.rt.print {
  width: 37px;
  justify-content: flex-start;
  padding-left: 2px;
}
.drop {
  margin-left: 5px;
  border-left: 4px solid transparent;
  border-right: 4px solid transparent;
  border-top: 4px solid #222;
}

/* footer */
.footer {
  flex: 1;
  display: flex;
  align-items: flex-start;
  background: #fff;
  padding: 11px 0 0 9px;
  gap: 10px;
}
.foot-btn {
  width: 25px;
  height: 21px;
  background: #c9e1f6;
  display: flex;
  align-items: center;
  justify-content: center;
  position: relative;
}
.num-btn {
  flex-direction: column;
  font-family: "Liberation Sans", sans-serif;
  font-size: 10px;
  font-weight: 700;
  line-height: 10px;
}
.ruler {
  width: 16px;
  height: 5px;
  background: #8fc77a;
  margin-bottom: 1px;
}
.zero {
  color: #111;
}
.zero u {
  color: #3d78d8;
  font-weight: 400;
}
.close-btn {
  margin-left: auto;
  margin-right: 10px;
  margin-top: 1px;
  width: 81px;
  height: 21px;
  box-sizing: border-box;
  background: #e1e1e1;
  border: 2px solid #0078d7;
  letter-spacing: 0.4px;
}
</style>
